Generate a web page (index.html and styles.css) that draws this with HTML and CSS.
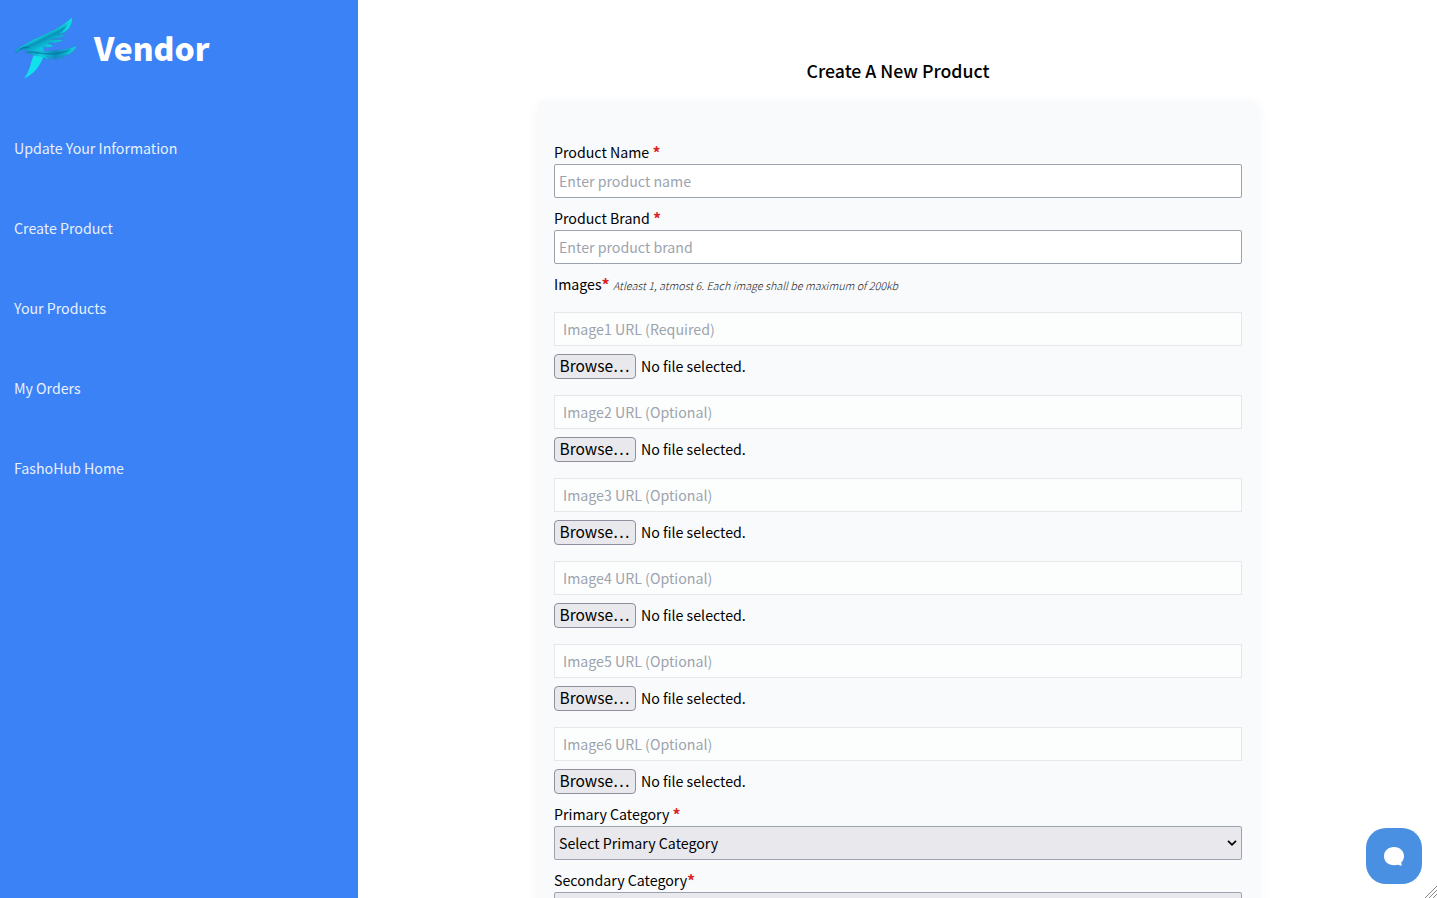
FILE: index.html
```
<!DOCTYPE html>
<html lang="en">
<head>
<meta charset="utf-8">
<title>Vendor</title>
<link rel="stylesheet" href="styles.css">
</head>
<body>
<div class="layout">
  <aside class="sidebar">
    <div class="brand">
      <svg class="logo" viewBox="0 0 240 240">
        <defs>
          <linearGradient id="upper" gradientUnits="userSpaceOnUse" x1="108" y1="82" x2="130" y2="126">
            <stop offset="0" stop-color="#12dfe8"/><stop offset="0.3" stop-color="#0a93bb"/><stop offset="0.55" stop-color="#0cb0cf"/><stop offset="1" stop-color="#10dce8"/>
          </linearGradient>
          <linearGradient id="lower" gradientUnits="userSpaceOnUse" x1="62" y1="130" x2="218" y2="130">
            <stop offset="0" stop-color="#0b86b2"/><stop offset="0.3" stop-color="#10d3e2"/><stop offset="0.6" stop-color="#0a8fba"/><stop offset="1" stop-color="#12dbe4"/>
          </linearGradient>
        </defs>
        <path d="M86 118 L118 116 L120 134 L116 152 Q105 177 89 193 Q75 205 60 212 Q73 193 78 176 Q83 157 89 141Z" fill="#10e1ec"/>
        <path d="M34 138 Q33 127 44 119 L91 93 Q123 80 149 66 Q181 50 204 28 Q207 47 193 63 Q180 76 160 81 L186 79 Q176 91 148 92 L142 95 L180 95 Q165 106 136 104 L132 105 L150 115 Q138 120 118 117 L118 128 L88 132 Q72 129 59 124 Q43 126 34 138Z" fill="url(#upper)" stroke="#287cb5"/>
        <path d="M35 136 Q41 125 54 122 L78 118 Q64 112 46 122Z" fill="#087aaa"/>
        <path d="M192 42 Q204 38 204 28 Q207 47 193 63 Q184 72 168 77 Q187 62 192 42Z" fill="#10d5e0"/>
        <path d="M62 133 L78 129 L109 131 L161 127 Q195 124 218 113 Q213 127 198 138 Q187 145 168 144 L184 151 Q167 155 147 145 L161 155 Q146 154 129 145 L139 156 Q122 155 112 145 L86 141Z" fill="url(#lower)" stroke="#267eb9"/>
        <path d="M68 133 Q83 128 101 132 Q145 140 203 123 Q180 140 145 140 Q105 141 68 133Z" fill="#087ba9" opacity=".75"/>
      </svg>
      <h1 class="brand-name">Vendor</h1>
    </div>
    <nav class="nav">
      <a class="nav-link">Update Your Information</a>
      <a class="nav-link">Create Product</a>
      <a class="nav-link">Your Products</a>
      <a class="nav-link">My Orders</a>
      <a class="nav-link">FashoHub Home</a>
    </nav>
  </aside>
  <main class="main">
    <h2 class="title">Create A New Product</h2>
    <form class="card">
      <label class="label">Product Name <b class="req">*</b></label>
      <input class="field" placeholder="Enter product name">
      <label class="label spaced">Product Brand <b class="req">*</b></label>
      <input class="field" placeholder="Enter product brand">
      <div class="label spaced">Images<b class="req">*</b> <i class="hint">Atleast 1, atmost 6. Each image shall be maximum of 200kb</i></div>
      <div class="images">
        <div class="image"><input class="field url" placeholder="Image1 URL (Required)" disabled><div class="file"><button type="button" class="browse">Browse…</button><span class="status">No file selected.</span></div></div>
        <div class="image"><input class="field url" placeholder="Image2 URL (Optional)" disabled><div class="file"><button type="button" class="browse">Browse…</button><span class="status">No file selected.</span></div></div>
        <div class="image"><input class="field url" placeholder="Image3 URL (Optional)" disabled><div class="file"><button type="button" class="browse">Browse…</button><span class="status">No file selected.</span></div></div>
        <div class="image"><input class="field url" placeholder="Image4 URL (Optional)" disabled><div class="file"><button type="button" class="browse">Browse…</button><span class="status">No file selected.</span></div></div>
        <div class="image"><input class="field url" placeholder="Image5 URL (Optional)" disabled><div class="file"><button type="button" class="browse">Browse…</button><span class="status">No file selected.</span></div></div>
        <div class="image"><input class="field url" placeholder="Image6 URL (Optional)" disabled><div class="file"><button type="button" class="browse">Browse…</button><span class="status">No file selected.</span></div></div>
      </div>
      <label class="label spaced">Primary Category <b class="req">*</b></label>
      <div class="field select"><span>Select Primary Category</span><svg class="chevron" viewBox="0 0 10 6"><path d="M1 .8 L5 4.8 L9 .8"/></svg></div>
      <label class="label spaced">Secondary Category<b class="req">*</b></label>
      <div class="field select"></div>
    </form>
  </main>
</div>
<button class="chat" aria-label="Chat">
  <svg viewBox="0 0 56 56"><path d="M28 19C22 19 18 23 18 28.2S22.200 37.200 28 37.200C29.700 37.200 31 37 32.400 36.700Q34 37.700 35.800 37.600L35.200 34.500C37 32.800 38 30.700 38 28C38 23 34 19 28 19Z"/></svg>
</button>
<svg class="grip" viewBox="0 0 13 13"><path d="M1 13 L13 1 M5 13 L13 5 M9 13 L13 9"/></svg>
</body>
</html>
```
FILE: styles.css
```
* { box-sizing: border-box; }
body {
  margin: 0;
  height: 898px;
  overflow: hidden;
  background: #fff;
  color: #000;
  font: 14.2px/24px "Noto Sans CJK JP", "Noto Sans CJK SC", sans-serif;
}
.layout { display: flex; height: 898px; overflow: hidden; }
.sidebar { width: 358px; flex: none; background: #3b82f6; color: #fff; }
.brand { display: flex; align-items: center; gap: 10px; height: 96px; padding-left: 4px; }
.logo { width: 80px; height: 80px; }
.brand-name { margin: 0; padding-bottom: 2px; font-size: 31.8px; line-height: 40px; font-weight: 900; }
.nav { display: flex; flex-direction: column; gap: 56px; padding: 40px 14px; }
.nav-link { height: 24px; color: #e9f0fe; }
.main { flex: 1; display: flex; flex-direction: column; align-items: center; padding-top: 56px; }
.title { margin: 0 0 16px; padding-left: 1px; font-size: 17.7px; line-height: 28px; font-weight: 500; }
.card {
  width: 720px;
  flex: none;
  padding: 40px 16px;
  border-radius: 8px;
  background: #f9fafc;
  box-shadow: 0 4px 14px rgba(0, 0, 0, .05);
}
.label { display: block; height: 24px; padding-left: .5px; white-space: nowrap; }
.spaced { margin-top: 8px; }
.req { color: #dc2626; font-size: 16px; font-weight: 700; line-height: 20px; vertical-align: -1px; }
.hint { color: #222; font-size: 10.8px; font-weight: 300; }
.field {
  display: block;
  width: 100%;
  height: 34px;
  margin: 0;
  padding: 0 4px 0 4.5px;
  border: 1px solid #9ca3af;
  border-radius: 2px;
  background: #fff;
  color: #000;
  font: inherit;
}
.field::placeholder { color: #9ca3af; opacity: 1; }
.images { display: flex; flex-direction: column; gap: 16px; margin-top: 16px; }
.image { display: flex; flex-direction: column; gap: 8px; }
.url { padding: 0 8px 0 8.5px; border-color: #e5e7eb; border-radius: 0; background: #fcfefd; }
.file { display: flex; align-items: center; gap: 5.500px; height: 25px; }
.status { padding-bottom: 2px; }
.browse {
  width: 82px;
  height: 25px;
  padding: 0 0 3px;
  border: 1px solid #8f8f9d;
  border-radius: 4px;
  background: #e9e9ed;
  color: #000;
  font: inherit;
  font-size: 15.5px;
  line-height: 20px;
}
.select { display: flex; align-items: center; justify-content: space-between; background: #e9e9ed; }
.chevron { width: 10px; height: 6px; fill: none; stroke: #000; stroke-width: 1.7; }
.chat {
  position: fixed;
  right: 15px;
  bottom: 14px;
  width: 56px;
  height: 56px;
  padding: 0;
  border: 0;
  border-radius: 20px;
  background: #4a90e2;
}
.chat svg { display: block; width: 56px; height: 56px; fill: #fff; }
.grip { position: fixed; right: 0; bottom: 0; width: 13px; height: 13px; fill: none; stroke: #888; stroke-width: 1; }
```
